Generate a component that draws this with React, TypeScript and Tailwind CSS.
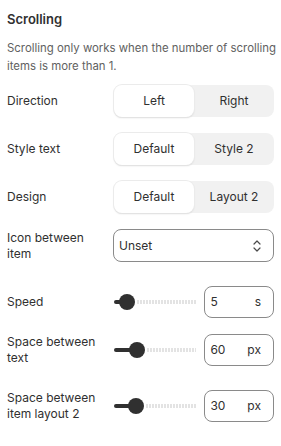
import React, { useState } from 'react';

const Segmented = ({ options, value, onChange }: { options: string[]; value: number; onChange: (i: number) => void }) => (
  <div className="flex h-8 w-40 rounded-lg bg-[#f1f1f1]">
    {options.map((o, i) => (
      <button
        key={o}
        onClick={() => onChange(i)}
        className={`flex-1 rounded-lg text-[12px] text-[#303030] ${value === i ? 'bg-white shadow-[0_1px_0_0_#e3e3e3,0_0_0_1px_#ebebeb,0_1px_2px_rgba(0,0,0,0.12)]' : ''}`}
      >
        {o}
      </button>
    ))}
  </div>
);

const SliderRow = ({ label, value, unit, pos }: { label: React.ReactNode; value: string; unit: string; pos: number }) => (
  <div className="flex items-center">
    <div className="mr-[11px] w-24 shrink-0 text-[12px] leading-4 text-[#303030]">{label}</div>
    <div className="relative h-4 w-[83px]">
      <div className="absolute left-0 top-[6px] h-1 rounded-full bg-[#303030]" style={{ width: pos }} />
      <div
        className="absolute right-0 top-[6px] h-1 bg-[repeating-linear-gradient(90deg,#e3e3e3_0_2px,transparent_2px_3px)]"
        style={{ left: pos + 10 }}
      />
      <div className="absolute top-0 h-4 w-4 rounded-full bg-[#303030]" style={{ left: pos - 8 }} />
    </div>
    <div className="ml-2 flex h-8 w-[70px] items-center justify-between rounded-lg border border-[#8a8a8a] pl-[5px] pr-3 text-[12px] text-[#303030]">
      <span>{value}</span>
      <span>{unit}</span>
    </div>
  </div>
);

const App: React.FC = () => {
  const [dir, setDir] = useState(0);
  const [styleText, setStyleText] = useState(0);
  const [design, setDesign] = useState(0);

  return (
    <div className="min-h-screen bg-white px-[7px] pt-[10px] font-['Inter',sans-serif] text-[#303030]">
      <h2 className="text-[13px] font-semibold leading-[18px]">Scrolling</h2>
      <p className="-mr-[7px] mt-[11px] text-[11.4px] leading-[18px] text-[#616161]">
        Scrolling only works when the number of scrolling items is more than 1.
      </p>

      <div className="mt-[10px] flex flex-col gap-4">
        <div className="flex items-center">
          <div className="mr-[11px] w-24 shrink-0 text-[12px]">Direction</div>
          <Segmented options={['Left', 'Right']} value={dir} onChange={setDir} />
        </div>
        <div className="flex items-center">
          <div className="mr-[11px] w-24 shrink-0 text-[12px]">Style text</div>
          <Segmented options={['Default', 'Style 2']} value={styleText} onChange={setStyleText} />
        </div>
        <div className="flex items-center">
          <div className="mr-[11px] w-24 shrink-0 text-[12px]">Design</div>
          <Segmented options={['Default', 'Layout 2']} value={design} onChange={setDesign} />
        </div>
        <div className="flex items-center">
          <div className="mr-[10px] w-24 shrink-0 text-[12px] leading-4">Icon between item</div>
          <div className="flex h-[33px] flex-1 items-center justify-between rounded-lg border border-[#8a8a8a] pl-[5px] pr-[10px] text-[12px]">
            <span>Unset</span>
            <svg width="12" height="14" viewBox="0 0 12 14" fill="none" stroke="#4a4a4a" strokeWidth="1.2" strokeLinecap="round" strokeLinejoin="round">
              <path d="M3 5l3-3 3 3" />
              <path d="M3 9l3 3 3-3" />
            </svg>
          </div>
        </div>
      </div>

      <div className="mt-6">
        <SliderRow label="Speed" value="5" unit="s" pos={13} />
      </div>
      <div className="mt-4">
        <SliderRow label={<>Space between<br />text</>} value="60" unit="px" pos={23} />
      </div>
      <div className="mt-6">
        <SliderRow label={<>Space between<br />item layout 2</>} value="30" unit="px" pos={22} />
      </div>
      <div className="mt-6 h-px bg-[#e3e3e3]" />
    </div>
  );
};

export default App;
